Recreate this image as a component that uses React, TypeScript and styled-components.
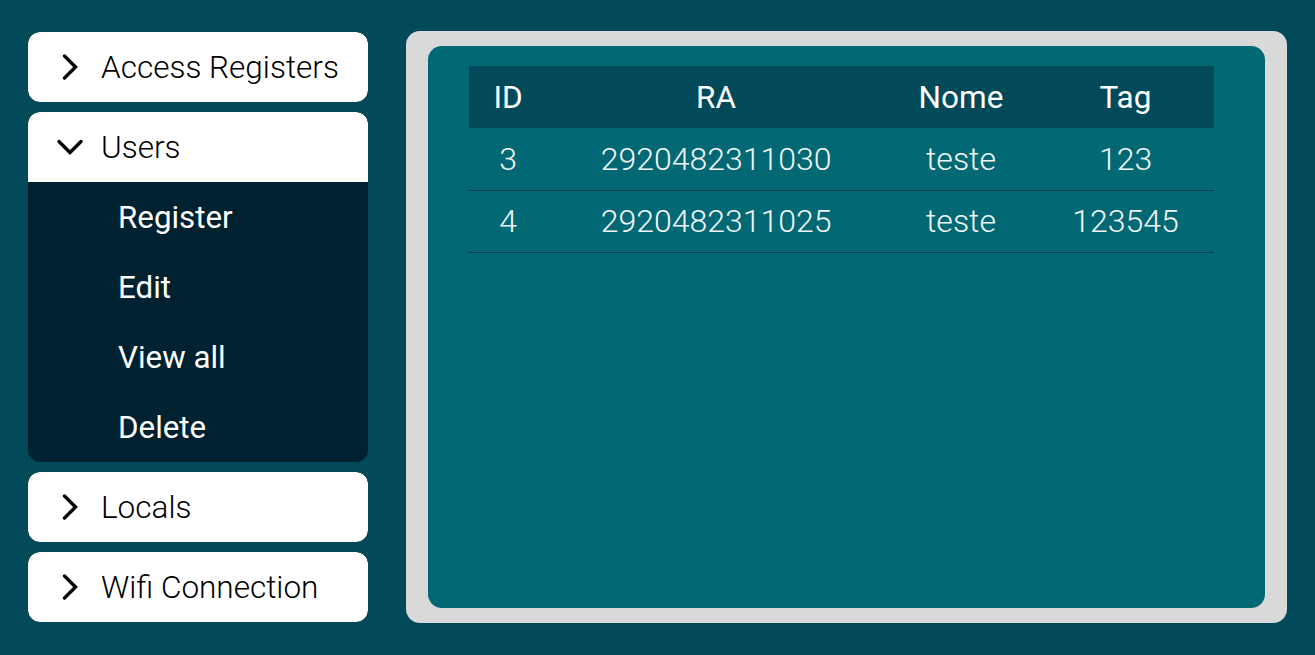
import React from "react";
import styled, { createGlobalStyle } from "styled-components";

const Global = createGlobalStyle`
  html, body { margin: 0; padding: 0; background: #024a59; }
  body { font-family: Roboto, "Noto Sans", sans-serif; }
  * { box-sizing: border-box; }
`;

const Page = styled.div`
  display: flex;
  align-items: flex-start;
  gap: 38px;
  padding: 32px 28px 0 28px;
  width: 1315px;
  height: 655px;
`;

const Sidebar = styled.nav`
  display: flex;
  flex-direction: column;
  gap: 10px;
  width: 340px;
  flex-shrink: 0;
`;

const Group = styled.div`
  border-radius: 12px;
  overflow: hidden;
  background: #00212f;
`;

const Header = styled.div<{ $open?: boolean }>`
  display: flex;
  align-items: center;
  gap: 17px;
  height: 70px;
  padding-left: 28px;
  background: #ffffff;
  color: #000;
  font-size: 31.5px;
  font-weight: 300;
  border-radius: ${(p) => (p.$open ? "12px 12px 0 0" : "12px")};
`;

const SubList = styled.ul`
  list-style: none;
  margin: 0;
  padding: 0;
`;

const SubItem = styled.li`
  display: flex;
  align-items: center;
  height: 70px;
  padding-left: 90px;
  color: #ffffff;
  font-size: 31.3px;
  font-weight: 400;
`;

const Panel = styled.section`
  width: 881px;
  height: 592px;
  margin-top: -1px;
  background: #d9d9d9;
  border-radius: 14px;
  padding: 15px 22px;
`;

const Inner = styled.div`
  height: 100%;
  background: #026873;
  border-radius: 14px;
  padding: 20px 51px 0 41px;
`;

const Table = styled.table`
  width: 100%;
  border-collapse: collapse;
  color: #ffffff;
`;

const Th = styled.th<{ $w: number }>`
  width: ${(p) => p.$w}px;
  height: 62px;
  background: #024a59;
  font-size: 31.5px;
  font-weight: 400;
  text-align: center;
  padding: 0;
`;

const Td = styled.td`
  height: 62px;
  text-align: center;
  font-size: 32px;
  font-weight: 300;
  color: #f0f6f6;
  padding: 0;
  border-bottom: 1px solid #02404c;
`;

const Chevron = ({ down }: { down?: boolean }) => (
  <svg width="28" height="28" viewBox="0 0 28 28" fill="none">
    <polyline
      points={down ? "3,8.5 14,19.5 25,8.5" : "8.5,3 19.5,14 8.5,25"}
      stroke="#000"
      strokeWidth="3.4"
      strokeLinecap="round"
      strokeLinejoin="miter"
    />
  </svg>
);

const rows = [
  { id: 3, ra: "2920482311030", nome: "teste", tag: "123" },
  { id: 4, ra: "2920482311025", nome: "teste", tag: "123545" },
];

export default function App() {
  return (
    <>
      <Global />
      <Page>
        <Sidebar>
          <Group>
            <Header>
              <Chevron />
              Access Registers
            </Header>
          </Group>
          <Group>
            <Header $open>
              <Chevron down />
              Users
            </Header>
            <SubList>
              <SubItem>Register</SubItem>
              <SubItem>Edit</SubItem>
              <SubItem>View all</SubItem>
              <SubItem>Delete</SubItem>
            </SubList>
          </Group>
          <Group>
            <Header>
              <Chevron />
              Locals
            </Header>
          </Group>
          <Group>
            <Header>
              <Chevron />
              Wifi Connection
            </Header>
          </Group>
        </Sidebar>
        <Panel>
          <Inner>
            <Table>
              <thead>
                <tr>
                  <Th $w={78}>ID</Th>
                  <Th $w={338}>RA</Th>
                  <Th $w={152}>Nome</Th>
                  <Th $w={177}>Tag</Th>
                </tr>
              </thead>
              <tbody>
                {rows.map((r) => (
                  <tr key={r.id}>
                    <Td>{r.id}</Td>
                    <Td>{r.ra}</Td>
                    <Td>{r.nome}</Td>
                    <Td>{r.tag}</Td>
                  </tr>
                ))}
              </tbody>
            </Table>
          </Inner>
        </Panel>
      </Page>
    </>
  );
}
